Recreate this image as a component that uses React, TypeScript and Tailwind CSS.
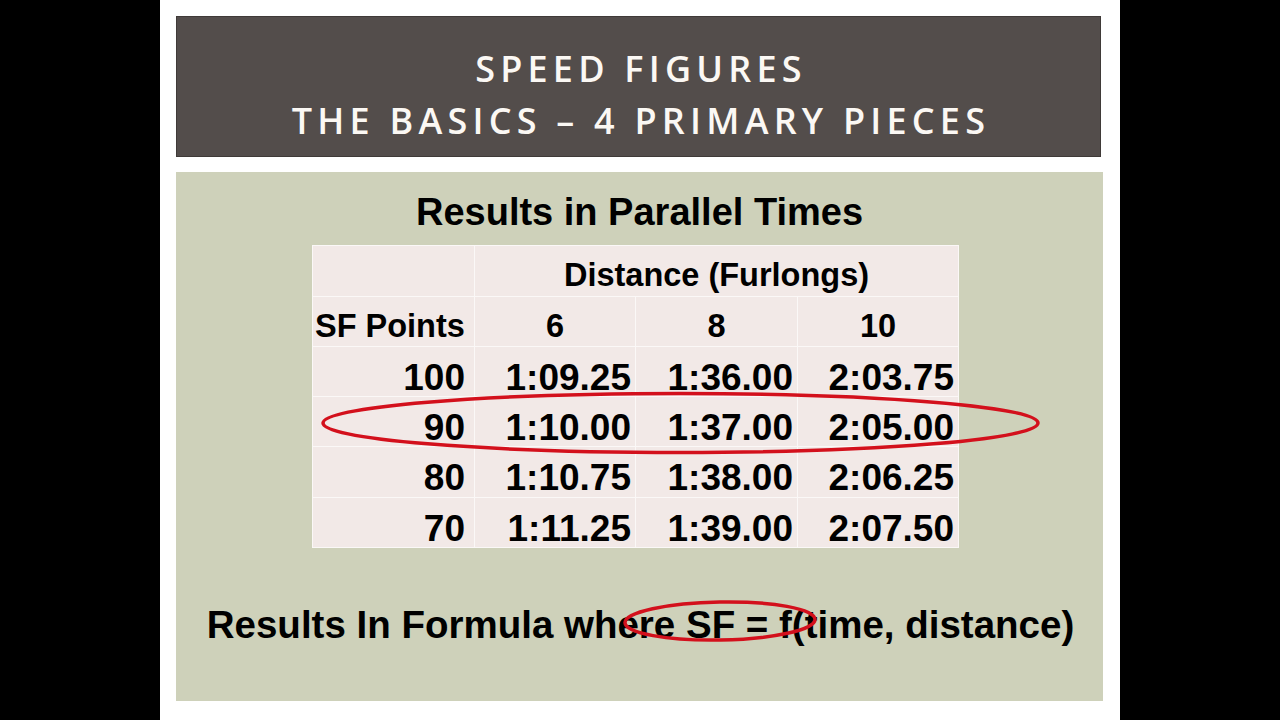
import React from "react";

const cellBase = "bg-[#f2e9e7] text-black flex leading-none";
const hdr = "text-[32.5px] font-bold";
const dat = "text-[37px] font-bold";

export default function App() {
  const rows: [string, string, string, string][] = [
    ["100", "1:09.25", "1:36.00", "2:03.75"],
    ["90", "1:10.00", "1:37.00", "2:05.00"],
    ["80", "1:10.75", "1:38.00", "2:06.25"],
    ["70", "1:11.25", "1:39.00", "2:07.50"],
  ];
  return (
    <div className="relative w-[1280px] h-[720px] bg-black flex justify-center overflow-hidden" style={{ fontFamily: '"Liberation Sans", Arial, sans-serif' }}>
      <div className="w-[960px] h-[720px] bg-white flex flex-col pl-[16px] pt-[16px]">
        <div
          className="w-[925px] h-[141px] bg-[#534d4b] border border-[#3f3a38] flex flex-col items-center justify-center text-[#fbf8f4] font-semibold text-[36px] leading-[52px] tracking-[0.145em] pt-[16px] pl-[5px]"
          style={{ fontFamily: '"Open Sans", sans-serif' }}
        >
          <div>SPEED FIGURES</div>
          <div>THE BASICS – 4 PRIMARY PIECES</div>
        </div>
        <div className="mt-[15px] w-[927px] h-[529px] bg-[#ced1ba] flex flex-col">
          <div className="mt-[21px] text-center text-[38px] font-bold leading-none text-black">Results in Parallel Times</div>
          <div className="mt-[14px] ml-[136px] w-[647px] bg-[#fbf8f7] p-px grid grid-cols-[161px_160px_161px_160px] grid-rows-[50px_49px_49px_49px_50px_49px] gap-px">
            <div className={cellBase}></div>
            <div className={`${cellBase} ${hdr} col-span-3 justify-center pt-[13px]`}>Distance (Furlongs)</div>
            <div className={`${cellBase} ${hdr} pl-[2px] pt-[13px]`}>SF Points</div>
            <div className={`${cellBase} ${hdr} justify-center pt-[13px]`}>6</div>
            <div className={`${cellBase} ${hdr} justify-center pt-[13px]`}>8</div>
            <div className={`${cellBase} ${hdr} justify-center pt-[13px]`}>10</div>
            {rows.map((r, i) => (
              <React.Fragment key={i}>
                <div className={`${cellBase} ${dat} justify-end pr-[9px] pt-[12px]`}>{r[0]}</div>
                <div className={`${cellBase} ${dat} justify-end pr-[4px] pt-[12px]`}>{r[1]}</div>
                <div className={`${cellBase} ${dat} justify-end pr-[4px] pt-[12px]`}>{r[2]}</div>
                <div className={`${cellBase} ${dat} justify-end pr-[4px] pt-[12px]`}>{r[3]}</div>
              </React.Fragment>
            ))}
          </div>
          <div className="mt-[58px] text-center text-[38.5px] font-bold leading-none text-black pl-[2px]">
            Results In Formula where SF = f(time, distance)
          </div>
        </div>
      </div>
      <svg className="absolute left-0 top-0 pointer-events-none" width="1280" height="720" viewBox="0 0 1280 720">
        <ellipse cx="680.5" cy="423" rx="357.5" ry="29.5" fill="none" stroke="#d3101c" strokeWidth="3.5" />
        <ellipse cx="720" cy="621" rx="95" ry="19" fill="none" stroke="#d3101c" strokeWidth="3.5" transform="rotate(-1 720 621)" />
      </svg>
    </div>
  );
}
